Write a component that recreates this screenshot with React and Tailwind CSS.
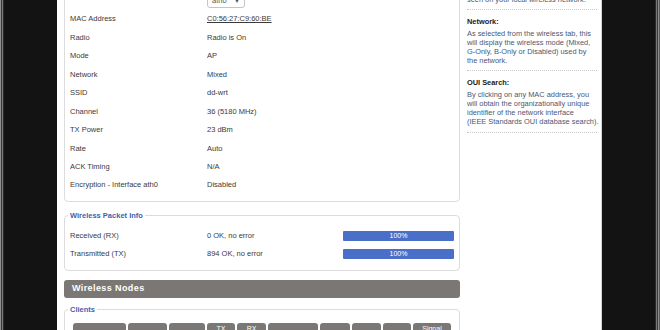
export default function App() {
  const rows = [
    ["MAC Address", <span className="underline">C0:56:27:C9:60:BE</span>],
    ["Radio", "Radio is On"],
    ["Mode", "AP"],
    ["Network", "Mixed"],
    ["SSID", "dd-wrt"],
    ["Channel", "36 (5180 MHz)"],
    ["TX Power", "23 dBm"],
    ["Rate", "Auto"],
    ["ACK Timing", "N/A"],
    ["Encryption - Interface ath0", "Disabled"],
  ];
  const cols = [
    [53, "MAC Address"],
    [39, "Interface"],
    [36, "Uptime"],
    [28, "TX\nRate"],
    [29, "RX\nRate"],
    [50, "Info"],
    [30, "Signal"],
    [29, "Noise"],
    [28, "SNR"],
    [38, "Signal\nQuality"],
  ];
  return (
    <div className="flex h-[330px] w-[660px] overflow-hidden bg-[#131313] font-['Liberation_Sans',Arial,sans-serif] text-[7.5px] text-[#3a3a3a]">
      <div className="w-[4px] shrink-0 bg-[linear-gradient(to_right,#8f8f8f_0_1px,#3a3a3a_1px_2px,#7a7a7a_2px_3px,#2a2a2a_3px_4px)]" />
      <div className="w-[53px] shrink-0" />
      <div className="flex w-[545px] shrink-0 items-start border-r border-[#d5d5d5] bg-white pl-[7px]">
        {/* main column */}
        <div className="flex w-[396px] shrink-0 flex-col">
          <div className="mt-[-20px] shrink-0 rounded-[4px] border border-[#dcdcdc] pb-[6px] pl-[5px] pt-[10.8px]">
            <div className="flex h-[18.44px] items-center">
              <div className="w-[137px] shrink-0" />
              <div className="flex h-[14px] w-[38px] items-center justify-between rounded-[3px] border border-[#c4c4c4] bg-white px-[4px] text-[#555]">
                <span>ath0</span>
                <span className="text-[6px]">&#9660;</span>
              </div>
            </div>
            {rows.map(([l, v], i) => (
              <div key={i} className="flex h-[18.44px] items-center leading-[10px]">
                <div className="w-[137px] shrink-0">{l}</div>
                <div>{v}</div>
              </div>
            ))}
          </div>

          <fieldset className="mt-[9px] shrink-0 rounded-[4px] border border-[#dcdcdc] pb-[6.3px] pl-[3px] pt-[5.8px]">
            <legend className="px-[2px] text-[7.5px] font-bold leading-[10px] text-[#3f5fae]">Wireless Packet Info</legend>
            {[["Received (RX)", "0 OK, no error"], ["Transmitted (TX)", "894 OK, no error"]].map(([l, v], i) => (
              <div key={i} className="flex h-[18.44px] items-center pl-[2px] leading-[10px]">
                <div className="w-[137px] shrink-0">{l}</div>
                <div className="w-[136px] shrink-0">{v}</div>
                <div className="flex h-[10px] w-[111px] items-center justify-center rounded-[1px] bg-[#4a6fc8] text-[7px] text-white">100%</div>
              </div>
            ))}
          </fieldset>

          <div className="mt-[9px] flex h-[18px] shrink-0 items-center rounded-[3px] bg-[#7a7774] pl-[8px] text-[9px] font-bold tracking-[0.4px] text-white">
            Wireless Nodes
          </div>

          <fieldset className="mt-[7px] shrink-0 rounded-[4px] border border-[#dcdcdc] pb-[6px] pl-[3px] pt-[8.5px]">
            <legend className="px-[2px] text-[7.5px] font-bold leading-[10px] text-[#3f5fae]">Clients</legend>
            <div className="ml-[5px] flex gap-[2px]">
              {cols.map(([w, t], i) => (
                <div
                  key={i}
                  style={{ width: w }}
                  className="flex h-[20px] shrink-0 items-center justify-center whitespace-pre-line rounded-t-[3px] bg-[#7a7774] text-center text-[7px] leading-[9px] text-white"
                >
                  {t}
                </div>
              ))}
            </div>
          </fieldset>
        </div>

        {/* sidebar */}
        <div className="ml-[7px] w-[130px] shrink-0 whitespace-nowrap text-[7.4px] leading-[9px] text-[#4a5870]">
          <div className="mb-[5.5px] mt-[-5.5px]">seen on your local wireless network.</div>
          <div className="border-t border-dotted border-[#c8c8c8] pb-[5.5px] pt-[6.5px]">
            <div className="font-bold text-[#222]">Network:</div>
            <div className="mt-[3px]">
              <div>As selected from the wireless tab, this</div>
              <div>will display the wireless mode (Mixed,</div>
              <div>G-Only, B-Only or Disabled) used by</div>
              <div>the network.</div>
            </div>
          </div>
          <div className="border-t border-dotted border-[#c8c8c8] pb-[6.5px] pt-[6.5px]">
            <div className="font-bold text-[#222]">OUI Search:</div>
            <div className="mt-[3px]">
              <div>By clicking on any MAC address, you</div>
              <div>will obtain the organizationally unique</div>
              <div>identifier of the network interface</div>
              <div>(IEEE Standards OUI database search).</div>
            </div>
          </div>
          <div className="border-t border-dotted border-[#c8c8c8]" />
        </div>
      </div>
      <div className="w-[53px] shrink-0" />
      <div className="w-[5px] shrink-0 bg-[linear-gradient(to_right,#2a2a2a_0_1px,#7a7a7a_1px_2px,#3a3a3a_2px_3px,#8f8f8f_3px_4px,#5a5a5a_4px_5px)]" />
    </div>
  );
}
